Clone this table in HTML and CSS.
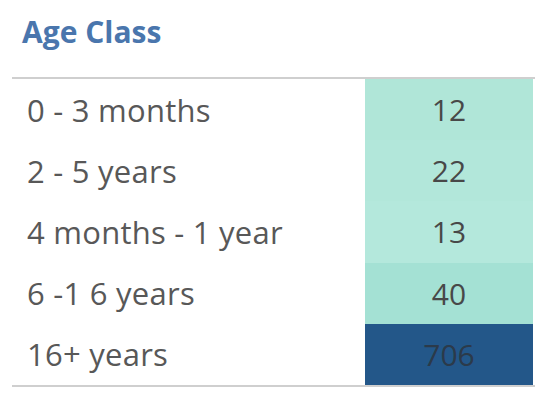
FILE: index.html
```html
<!DOCTYPE html>
<html>
<head>
<meta charset="utf-8">
<link rel="stylesheet" href="styles.css">
</head>
<body>
<div class="panel">
  <h1 class="title">Age Class</h1>
  <div class="table">
    <div class="row"><div class="label">0 - 3 months</div><div class="value v1">12</div></div>
    <div class="row"><div class="label">2 - 5 years</div><div class="value v2">22</div></div>
    <div class="row"><div class="label">4 months - 1 year</div><div class="value v3">13</div></div>
    <div class="row"><div class="label">6 -1 6 years</div><div class="value v4">40</div></div>
    <div class="row"><div class="label">16+ years</div><div class="value v5">706</div></div>
  </div>
</div>
</body>
</html>
```
FILE: styles.css
```css
html, body {
  margin: 0;
  padding: 0;
  background: #ffffff;
}
.panel {
  width: 550px;
  height: 405px;
  padding-left: 12px;
  box-sizing: border-box;
  font-family: "Open Sans", "DejaVu Sans", sans-serif;
}
.title {
  margin: 0;
  height: 77px;
  box-sizing: border-box;
  padding: 13px 0 0 10px;
  font-size: 30px;
  font-weight: 700;
  line-height: 38px;
  color: #4a76ad;
}
.table {
  width: 523px;
  border-top: 2px solid #cfcfcf;
  border-bottom: 2px solid #cfcfcf;
  display: flex;
  flex-direction: column;
}
.row {
  display: grid;
  grid-template-columns: 353px 168px;
  height: 61.2px;
}
.label {
  display: flex;
  align-items: center;
  padding-left: 15px;
  font-size: 31px;
  letter-spacing: 0.25px;
  color: #585858;
}
.value {
  display: flex;
  align-items: center;
  justify-content: center;
  font-size: 30px;
  color: #484848;
}
.v1 { background: #b0e6d8; }
.v2 { background: #b2e7da; }
.v3 { background: #b4e8dc; }
.v4 { background: #a4e1d4; }
.v5 { background: #235789; color: #2b3a4a; }
```
